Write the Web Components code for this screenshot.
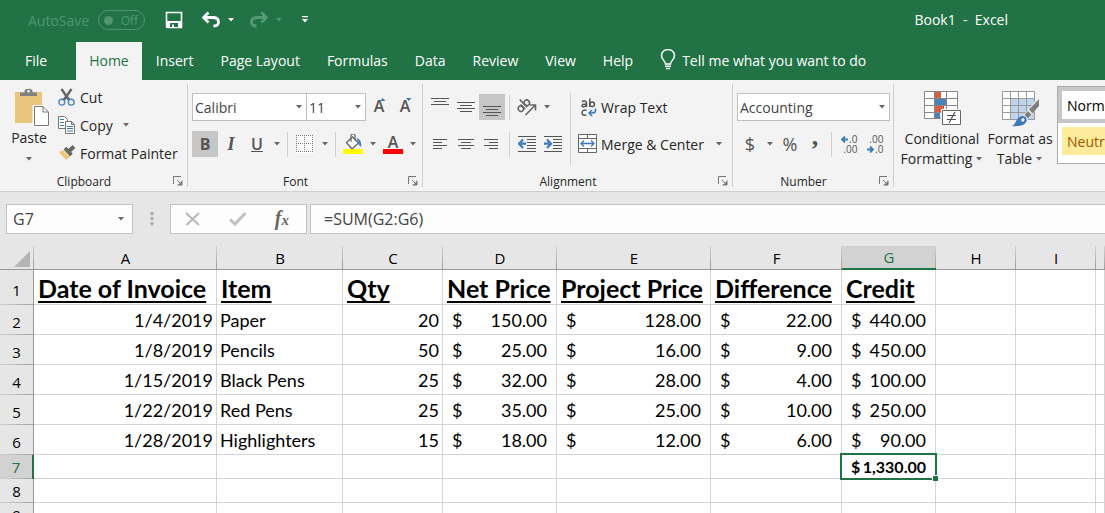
<!DOCTYPE html>
<html lang="en">
<head>
<meta charset="utf-8">
<title>Book1 - Excel</title>
<style>
body { margin: 0; font-family: "Open Sans", "Noto Sans", sans-serif; font-size: 14px; color: #262626; background: #e6e6e6; overflow: hidden; }
</style>
</head>
<body>
<excel-app></excel-app>
<script>
const RESET = `
*, *::before, *::after { box-sizing: border-box; }
button, input, select { font: inherit; color: inherit; margin: 0; padding: 0; border: 0; background: none; border-radius: 0; outline: 0; }
button { cursor: default; white-space: nowrap; }
`;
const define = (name, css, html, setup) => {
  const tpl = document.createElement('template');
  customElements.define(name, class extends HTMLElement {
    connectedCallback() {
      if (this.shadowRoot) return;
      tpl.innerHTML = `<style>${RESET}${css}</style>${html}`;
      this.attachShadow({ mode: 'open' }).append(tpl.content.cloneNode(true));
      if (setup) setup(this, this.shadowRoot);
    }
  });
};

/* Icons: [width, height, markup] */
const lines = list => list.map(([x, y, w]) => `<rect x="${x}" y="${y}" width="${w}" height="1"/>`).join('');
const ICONS = {
  save: [18, 18, `<path d="M1.500 1.500h15v15h-13.500l-1.500-1.500z" fill="none" stroke="#fff" stroke-width="1.600"/><path d="M1 10h16v7H1z" fill="#fff"/><path d="M5 12h8v4H5z" fill="#217346"/><path d="M7 13.500h2V17H7z" fill="#fff"/>`],
  undo: [20, 18, `<path d="M3 6.500h8.500c4 0 6 2 6 4.500s-2 4-5 4" fill="none" stroke="#fff" stroke-width="2.800"/><path d="M7.500 1.500L2.500 6.500l5 5" fill="none" stroke="#fff" stroke-width="2.600"/>`],
  redo: [20, 18, `<g transform="matrix(-1 0 0 1 20 0)" stroke="#549b75" fill="none"><path d="M3 6.500h8.500c4 0 6 2 6 4.500s-2 4-5 4" stroke-width="2.800"/><path d="M7.500 1.500L2.500 6.500l5 5" stroke-width="2.600"/></g>`],
  arrow: [8, 4, `<path d="M1 0h6L4 3.500z" fill="currentColor"/>`],
  qat: [6, 8, `<path d="M0 0h6v1.300H0zM0 3h6L3 6.500z" fill="#fff"/>`],
  bulb: [16, 22, `<path d="M5.500 15c0-3-4-4.500-4-8.500a6.500 6 0 0 1 13 0c0 4-4 5.500-4 8.500z" fill="none" stroke="#fff" stroke-width="1.500"/><path d="M5 17.300h6M6 19.600h4" stroke="#fff" stroke-width="1.500"/>`],
  paste: [42, 40, `<path d="M7 4h27v31H7z" fill="#ecc57d"/><path d="M12 8V4.500h4.500V3c0-3 8-3 8 0v1.500H29V8z" fill="#808080"/><circle cx="20.500" cy="3.200" r="1.300" fill="#fff"/><path d="M26 18.500h9.500l5 5V38H26z" fill="#fff" stroke="#fff" stroke-width="3"/><path d="M26.500 18.500h8.500l5.500 5.500v13.500h-14zM35 18.500V24h5.500" fill="#fff" stroke="#777"/>`],
  cut: [18, 18, `<path d="M3.500 1l7.500 11M13.500 1L6 12" stroke="#666" stroke-width="2.400"/><path d="M8.500 8l4 4M8.500 8l-4 4" stroke="#666" stroke-width="1.200"/><g fill="#f3f3f3" stroke="#4a82bb" stroke-width="1.400"><circle cx="3.800" cy="14.200" r="2.900"/><circle cx="13.200" cy="14.200" r="2.900"/></g>`],
  copy: [18, 18, `<g fill="#fff" stroke="#777"><path d="M.5.500h6l3 3v9H.5z"/><path d="M7.500 5.500h6l3 3v9h-9z"/><path d="M13.500 5.500v3h3" fill="none"/></g><path d="M2 3.500h4M2 6.500h4M2 9.500h4M9 10.500h6M9 12.500h6M9 15h6" stroke="#3c7ab8"/>`],
  painter: [18, 18, `<path d="M1 8l7-2.500 5 6L8 16z" fill="#ecc57d"/><path d="M7 4l6.500 7" stroke="#666" stroke-width="3.600"/><path d="M10.500 7.500L16 2.500" stroke="#666" stroke-width="4"/><path d="M8.500 7.500l3.500 3.500" stroke="#f3f3f3" stroke-width=".8" transform="translate(-2.300 .5)"/>`],
  launch: [10, 10, `<path d="M.5 8V.5H8M4 4l4.500 4.500M9 4.500V9H4.500" fill="none" stroke="#777"/><path d="M9 5v4H5z" fill="#777"/>`],
  grow: [16, 18, `<path d="M9 3h5.500L11.700 0z" fill="#3c7ab8"/>`],
  shrink: [16, 18, `<path d="M9 0h5.500L11.700 3z" fill="#3c7ab8"/>`],
  borders: [18, 18, `<path d="M0 0h18v18H0z" fill="#fff"/><path d="M0 .5h18M0 8.500h18M0 16.500h18M.5 0v17M8.500 0v17M16.500 0v17" stroke="#777" stroke-dasharray="1 1" fill="none"/>`],
  fill: [20, 20, `<path d="M3.500 8.500L9.500 3l6 6-6.500 6z" fill="#fff" stroke="#666" stroke-width="1.300"/><path d="M8 8V1.500c0-2 4-2 4 0v5" fill="none" stroke="#666" stroke-width="1.200"/><path d="M13.500 4c4 1 5 4 4.800 9-2-1-3-3-3.300-5z" fill="#4a82bb"/><path d="M0 15h20v5H0z" fill="#ff0"/>`],
  fontcolor: [20, 20, `<path d="M0 15h20v5H0z" fill="red"/>`],
  top: [18, 20, `<g fill="#555">${lines([[0,1,18],[3,4,12],[0,7,18]])}</g>`],
  middle: [18, 20, `<g fill="#555">${lines([[0,5,18],[3,8,12],[0,11,18],[3,14,12]])}</g>`],
  bottom: [18, 20, `<g fill="#555">${lines([[0,9,18],[3,12,12],[0,15,18],[3,18,12]])}</g>`],
  left: [18, 20, `<g fill="#555">${lines([[2,5,14],[2,8,9],[2,11,14],[2,14,9]])}</g>`],
  center: [18, 20, `<g fill="#555">${lines([[1,5,16],[4,8,10],[1,11,16],[4,14,10]])}</g>`],
  right: [18, 20, `<g fill="#555">${lines([[1,5,14],[6,8,9],[1,11,14],[6,14,9]])}</g>`],
  outdent: [18, 18, `<g fill="#555">${lines([[0,1,18],[9,4,9],[9,7,9],[9,10,9],[9,13,9],[0,16,18]])}</g><path d="M8 8.700H3M5 4.500L1 8.700l4 4.200" fill="none" stroke="#3c7ab8" stroke-width="2.200"/>`],
  indent: [18, 18, `<g fill="#555">${lines([[0,1,18],[9,4,9],[9,7,9],[9,10,9],[9,13,9],[0,16,18]])}</g><path d="M0 8.700h5M3 4.500l4 4.200-4 4.200" fill="none" stroke="#3c7ab8" stroke-width="2.200"/>`],
  orient: [20, 20, `<g fill="none" stroke="#666" stroke-width="1.600"><g transform="rotate(-45 7 9)"><ellipse cx="2.800" cy="8.700" rx="2.500" ry="2.800"/><path d="M5.700 5.500v6.500M8.500 1.500V12"/><ellipse cx="11.300" cy="8.700" rx="2.600" ry="2.800"/></g><path d="M8.500 18l9.500-9.500M13 8h5.500v5.500"/></g>`],
  wrap: [20, 20, `<g transform="translate(2)"><g fill="none" stroke="#555" stroke-width="1.500"><path d="M2 5c1-1.300 4.500-1.500 4.500 1V10M6.500 7C4 7 2 7 2 8.700s3.500 1.300 4.500-.5M9.800 1.500V10"/><ellipse cx="12.200" cy="7.300" rx="2.300" ry="2.300"/><path d="M6.500 13.500c-2-1-4.500 0-4.500 2.200s2.500 3.200 4.500 2.200"/></g><path d="M15.500 11.500v2c0 2-1 2.500-3 2.500H9.500M12 13l-3 3 3 3" fill="none" stroke="#3c7ab8" stroke-width="1.500"/></g>`],
  merge: [20, 20, `<path d="M.5.500h18v18H.5z" fill="#fff" stroke="#666"/><path d="M.5 4.500h18M.5 14.500h18M9.500.5v4M9.500 14.500v4" stroke="#666"/><path d="M3 9.500h13M6 6.500l-3 3 3 3M13 6.500l3 3-3 3" fill="none" stroke="#3c7ab8" stroke-width="1.400"/>`],
  leftArrow: [7, 7, `<path d="M7 3.500H1.500M4 .5l-3 3 3 3" fill="none" stroke="#3c7ab8" stroke-width="1.800"/>`],
  rightArrow: [7, 7, `<path d="M0 3.500h5.500M3 .5l3 3-3 3" fill="none" stroke="#3c7ab8" stroke-width="1.800"/>`],
  conditional: [38, 36, `<path d="M1.500.5h33v27h-33z" fill="#fff"/><path d="M12 1h6v6h-6zM12 15h9v6h-9z" fill="#d65f41"/><path d="M12 8h11v6H12zM12 22h5v6h-5z" fill="#4a82bb"/><path d="M1.500.5h33v27h-33zM1.500 7.500h33M1.500 14.500h33M1.500 21.500h33M11.500.5v27M23.500.5v27" fill="none" stroke="#888"/><path d="M18 18h20v16H18z" fill="#f3f3f3"/><path d="M19.500 19.500h18v14h-18z" fill="#fff" stroke="#666"/><path d="M24 24.500h9M24 28.500h9M32 21l-6 11" stroke="#555" stroke-width="1.200" fill="none"/>`],
  format: [38, 36, `<path d="M1.500.5h32v28h-32z" fill="#fff"/><path d="M9 8h25v21H9z" fill="#bfd3ea"/><path d="M1.500.5h32v28h-32zM1.500 7.500h32M1.500 14.500h32M1.500 21.500h32M9.500.5v28M17.500.5v28M25.500.5v28" fill="none" stroke="#999"/><path d="M38 6L20 27l4 5 14-17z" fill="#f3f3f3"/><path d="M38 8L28 18.500l3.500 4L38 15z" fill="#7f7f7f"/><path d="M27 20l-3.500 4 3.500 3.500 3.500-4z" fill="#7f7f7f"/><path d="M11 35c4-1 4-9 10-10 5-.5 6 5 3 7.500-3 2.500-8 3-13 2.500z" fill="#3c7ab8"/><path d="M20 29c1-2 3-2 3.500-1 .3 1.500-1 2.500-2 3z" fill="#fff"/>`],
  dots: [4, 14, `<path d="M.5 0h3v3h-3zM.5 5h3v3h-3zM.5 10h3v3h-3z" fill="#aaa"/>`],
  cancel: [16, 14, `<path d="M1 1l13 12M14 1L1.500 13" stroke="#b8b8b8" stroke-width="2" fill="none"/>`],
  enter: [18, 14, `<path d="M1 7.500l5 4.500L16.500 1" stroke="#c0c0c0" stroke-width="3" fill="none"/>`],
  corner: [16, 16, `<path d="M16 0v16H0z" fill="#b4b4b4"/>`]
};
define('ui-icon', `:host { display: block; flex: none; line-height: 0; } svg { display: block; }`, '', (el, root) => {
  const [w, h, body] = ICONS[el.getAttribute('name')];
  root.innerHTML += `<svg width="${w}" height="${h}" viewBox="0 0 ${w} ${h}" aria-hidden="true">${body}</svg>`;
});
define('drop-arrow', `:host { display: block; flex: none; color: #666; } button { display: flex; align-items: center; justify-content: center; width: 14px; height: 26px; }`,
  `<button aria-label="More options"><ui-icon name="arrow"></ui-icon></button>`);
define('v-rule', `:host { display: block; flex: none; width: 1px; background: #d0d0d0; }`, '');

define('combo-box', `
:host { display: grid; grid-template: 28px / minmax(0, 1fr); align-items: center; }
select { grid-area: 1 / 1; width: 100%; height: 28px; padding: 0 2px; border: 1px solid #c0c0c0; background: #fff; appearance: none; color: #444; }
ui-icon { grid-area: 1 / 1; justify-self: end; margin-right: 4px; color: #666; pointer-events: none; }`,
`<select><option></option></select><ui-icon name="arrow"></ui-icon>`, (el, root) => {
  root.querySelector('select').setAttribute('aria-label', el.getAttribute('label'));
  root.querySelector('option').textContent = el.getAttribute('value');
});

define('title-bar', `
:host { display: flex; align-items: center; height: 40px; padding: 0 97px 0 28px; background: #217346; color: #fff; }
label { display: flex; align-items: center; gap: 9px; color: #4f9670; }
.pill { display: flex; align-items: center; justify-content: space-between; width: 47px; height: 20px; padding: 0 6px 0 5px; border: 1px solid #4f9670; border-radius: 10px; font-size: 12px; }
input { appearance: none; width: 9px; height: 9px; border-radius: 5px; background: #4f9670; }
nav { display: flex; align-items: center; margin-left: 20px; }
.undo { margin-left: 18px; } .redo { margin-left: 8px; } .drop { padding: 6px; }
.dim { color: #4f9670; }
.qat { margin-left: 13px; }
h1 { margin: 0 0 2px auto; font-size: 14px; font-weight: 400; white-space: pre; }`,
`<label><span>AutoSave</span><span class="pill"><input type="checkbox" aria-label="AutoSave"><span>Off</span></span></label>
<nav><button aria-label="Save"><ui-icon name="save"></ui-icon></button>
<button class="undo" aria-label="Undo"><ui-icon name="undo"></ui-icon></button><button class="drop" aria-label="Undo list"><ui-icon name="arrow"></ui-icon></button>
<button class="redo" aria-label="Redo"><ui-icon name="redo"></ui-icon></button><button class="drop dim" aria-label="Redo list"><ui-icon name="arrow"></ui-icon></button>
<button class="qat" aria-label="Customize toolbar"><ui-icon name="qat"></ui-icon></button></nav>
<h1>Book1  -  Excel</h1>`);

define('ribbon-tabs', `
:host { display: flex; gap: 1px; padding: 2px 0 0 12px; height: 40px; background: #217346; color: #fff; }
button { padding: 0 13px 2px; height: 38px; }
.file { margin-right: 15px; }
.on { background: #f3f3f3; color: #217346; }
label { display: flex; align-items: center; gap: 6px; margin-left: 13px; padding-bottom: 2px; }
input { width: 240px; height: 28px; } input::placeholder { color: #fff; opacity: 1; }`,
`<button class="file">File</button><button class="on">Home</button><button>Insert</button><button>Page Layout</button><button>Formulas</button><button>Data</button><button>Review</button><button>View</button><button>Help</button>
<label><ui-icon name="bulb"></ui-icon><input type="text" aria-label="Tell me what you want to do" placeholder="Tell me what you want to do"></label>`);

define('ribbon-group', `
:host { display: grid; flex: none; grid-template: 87px 20px / minmax(0, 1fr); padding-top: 4px; background: linear-gradient(#d0d0d0, #d0d0d0) right 4px / 1px 103px no-repeat; }
footer { display: grid; grid-template-columns: 1fr 20px; align-items: center; font-size: 12px; text-align: center; }
footer button { display: flex; justify-content: center; }`,
`<slot></slot><footer><span class="name"></span><button><ui-icon name="launch"></ui-icon></button></footer>`, (el, root) => {
  const name = el.getAttribute('label');
  root.querySelector('.name').textContent = name;
  root.querySelector('button').setAttribute('aria-label', name + ' settings');
});

define('clipboard-tools', `
:host { display: flex; gap: 8px; padding-left: 8px; }
.paste { display: flex; flex-direction: column; align-items: center; width: 42px; height: 84px; padding-top: 4px; line-height: 20px; }
.paste ui-icon[name=arrow] { margin-top: 9px; color: #666; }
.list { display: flex; flex-direction: column; }
.row { display: flex; align-items: center; gap: 6px; height: 28px; padding-bottom: 2px; }
.row button { display: flex; align-items: center; gap: 4px; }`,
`<button class="paste"><ui-icon name="paste"></ui-icon><span>Paste</span><ui-icon name="arrow"></ui-icon></button>
<div class="list"><div class="row"><button><ui-icon name="cut"></ui-icon>Cut</button></div>
<div class="row"><button><ui-icon name="copy"></ui-icon>Copy</button><drop-arrow></drop-arrow></div>
<div class="row"><button><ui-icon name="painter"></ui-icon>Format Painter</button></div></div>`);

const TOOLROW = `
.row { display: flex; align-items: center; height: 28px; }
.row > button { display: flex; flex: none; align-items: center; justify-content: center; width: 26px; height: 26px; color: #555; }
.row > button.on { background: #c6c6c6; }
.row > v-rule { height: 25px; }
`;
define('font-tools', TOOLROW + `
:host { display: flex; flex-direction: column; gap: 9px; padding: 9px 0 0 4px; }
.face { width: 115px; } .size { width: 60px; margin-left: -1px; }
.letter { display: grid; justify-items: center; font-weight: 600; font-size: 16px; line-height: 20px; }
.letter > * { grid-area: 1 / 1; } .letter span { line-height: 16px; }
.b { font-weight: 700; font-size: 16px; } .i { font: italic 700 18px "Liberation Serif", serif; } .u { font-weight: 600; font-size: 16px; text-decoration: underline; }
.gap { margin: 0 4px 0 3px; } `,
`<div class="row"><combo-box class="face" label="Font" value="Calibri"></combo-box><combo-box class="size" label="Font size" value="11"></combo-box>
<button aria-label="Increase font size"><span class="letter"><ui-icon name="grow"></ui-icon><span>A</span></span></button><button aria-label="Decrease font size"><span class="letter"><ui-icon name="shrink"></ui-icon><span>A</span></span></button></div>
<div class="row"><button class="on b">B</button><button class="i">I</button><button class="u">U</button><drop-arrow></drop-arrow><v-rule class="gap"></v-rule>
<button aria-label="Borders"><ui-icon name="borders"></ui-icon></button><drop-arrow></drop-arrow><v-rule class="gap"></v-rule><button aria-label="Fill color"><ui-icon name="fill"></ui-icon></button><drop-arrow></drop-arrow>
<button aria-label="Font color"><span class="letter"><ui-icon name="fontcolor"></ui-icon><span>A</span></span></button><drop-arrow></drop-arrow></div>`);

define('alignment-tools', TOOLROW + `
:host { display: flex; padding: 9px 4px 0; }
.col { display: flex; flex: none; flex-direction: column; gap: 9px; }
.rule { margin: 0 4px; }
.tall { height: 72px; margin: 0 7px 0 4px; }
.row > button.text { width: auto; gap: 3px; color: inherit; }
.merge { gap: 8px; }`,
`<div class="col"><div class="row"><button aria-label="Top align"><ui-icon name="top"></ui-icon></button><button aria-label="Middle align"><ui-icon name="middle"></ui-icon></button><button class="on" aria-label="Bottom align"><ui-icon name="bottom"></ui-icon></button><v-rule class="rule"></v-rule><button aria-label="Orientation"><ui-icon name="orient"></ui-icon></button><drop-arrow></drop-arrow></div>
<div class="row"><button aria-label="Align left"><ui-icon name="left"></ui-icon></button><button aria-label="Center"><ui-icon name="center"></ui-icon></button><button aria-label="Align right"><ui-icon name="right"></ui-icon></button><v-rule class="rule"></v-rule><button aria-label="Decrease indent"><ui-icon name="outdent"></ui-icon></button><button aria-label="Increase indent"><ui-icon name="indent"></ui-icon></button></div></div>
<v-rule class="tall"></v-rule>
<div class="col"><div class="row"><button class="text"><ui-icon name="wrap"></ui-icon>Wrap Text</button></div><div class="row merge"><button class="text"><ui-icon name="merge"></ui-icon>Merge &amp; Center</button><drop-arrow></drop-arrow></div></div>`);

define('number-tools', TOOLROW + `
:host { display: flex; flex-direction: column; gap: 9px; padding: 9px 4px 0; }
.row > button { font-size: 18px; } .row > button.comma { width: 24px; font: 700 26px/12px "Liberation Serif", serif; align-items: start; }
.rule { margin: 0 4px; }
.row > button.dec { display: grid; font-size: 10px; line-height: 10px; align-content: center; justify-content: stretch; padding: 0 5px; }
.dec span { display: flex; align-items: center; justify-content: flex-end; gap: 1px; }`,
`<combo-box label="Number format" value="Accounting"></combo-box>
<div class="row"><button>$</button><drop-arrow></drop-arrow><button>%</button><button class="comma">,</button><v-rule class="rule"></v-rule>
<button class="dec"><span><ui-icon name="leftArrow"></ui-icon>.0</span><span>.00</span></button><button class="dec"><span>.00</span><span><ui-icon name="rightArrow"></ui-icon>.0</span></button></div>`);

define('style-tools', `
:host { display: flex; flex: 1; min-width: 0; padding: 6px 0 0 4px; overflow: hidden; }
.big { display: flex; flex: none; flex-direction: column; align-items: center; height: 84px; padding-top: 5px; line-height: 20px; width: 88px; }
.big.fmt { width: 68px; margin-right: 3px; }
.big ui-icon { margin-bottom: 2px; }
.big span { display: flex; align-items: center; gap: 3px; } .big span ui-icon { margin: 0; color: #666; }
.gallery { display: flex; flex: 1 0 150px; flex-direction: column; gap: 4px; height: 78px; border: 1px solid #ababab; background: #fff; }
.gallery button { text-align: left; height: 28px; margin-left: 4px; padding-left: 5px; }
.gallery .normal { height: 36px; margin: 0; border: 4px solid #c6c6c6; color: #000; }
.gallery .neutral { background: #ffeb9c; color: #9c5700; }`,
`<button class="big"><ui-icon name="conditional"></ui-icon><span>Conditional</span><span>Formatting<ui-icon name="arrow"></ui-icon></span></button>
<button class="big fmt"><ui-icon name="format"></ui-icon><span>Format as</span><span>Table<ui-icon name="arrow"></ui-icon></span></button>
<div class="gallery"><button class="normal">Normal</button><button class="neutral">Neutral</button></div>`);

define('excel-ribbon', `
:host { display: flex; height: 112px; background: #f3f3f3; border-bottom: 1px solid #cfcfcf; overflow: hidden; }
.clip { width: 188px; } .font { width: 235px; } .align { width: 310px; } .num { width: 161px; }`,
`<ribbon-group class="clip" label="Clipboard"><clipboard-tools></clipboard-tools></ribbon-group>
<ribbon-group class="font" label="Font"><font-tools></font-tools></ribbon-group>
<ribbon-group class="align" label="Alignment"><alignment-tools></alignment-tools></ribbon-group>
<ribbon-group class="num" label="Number"><number-tools></number-tools></ribbon-group>
<style-tools></style-tools>`);

define('formula-bar', `
:host { display: flex; align-items: center; height: 54px; padding-left: 6px; color: #444; font-size: 16px; }
.box { display: flex; align-items: center; height: 30px; border: 1px solid #c3c3c3; background: #fdfdfd; }
.name { width: 127px; padding: 0 4px 0 6px; } .name input { flex: 1; min-width: 0; }
.dots { margin: 0 16px 0 17px; }
.tools { width: 137px; margin-right: 3px; padding-right: 3px; justify-content: space-around; }
.fx { font: italic 700 20px/20px "Liberation Serif", serif; color: #666; } .fx small { font-size: 15px; }
.formula { flex: 1; border-right: 0; padding-left: 13px; } .formula input { flex: 1; }`,
`<div class="box name"><input type="text" aria-label="Name box" value="G7"><drop-arrow></drop-arrow></div><ui-icon class="dots" name="dots"></ui-icon>
<div class="box tools"><button aria-label="Cancel"><ui-icon name="cancel"></ui-icon></button><button aria-label="Enter"><ui-icon name="enter"></ui-icon></button><button class="fx">f<small>x</small></button></div>
<div class="box formula"><input type="text" aria-label="Formula" value="=SUM(G2:G6)"></div>`);

const HEAD = ['Date of Invoice', 'Item', 'Qty', 'Net Price', 'Project Price', 'Difference', 'Credit'];
const DATA = [
  ['1/4/2019', 'Paper', '20', '150.00', '128.00', '22.00', '440.00'],
  ['1/8/2019', 'Pencils', '50', '25.00', '16.00', '9.00', '450.00'],
  ['1/15/2019', 'Black Pens', '25', '32.00', '28.00', '4.00', '100.00'],
  ['1/22/2019', 'Red Pens', '25', '35.00', '25.00', '10.00', '250.00'],
  ['1/28/2019', 'Highlighters', '15', '18.00', '12.00', '6.00', '90.00']
];
const blanks = n => '<td></td>'.repeat(n);
const money = v => `<td><div class="money"><span>$</span><span>${v}</span></div></td>`;
define('sheet-grid', `
:host { display: block; overflow: hidden; }
table { width: 100%; table-layout: fixed; border-collapse: separate; border-spacing: 0; background: #fff; font: 18px/22px Lato, sans-serif; color: #000; }
td, th { padding: 0; font-weight: 400; white-space: nowrap; }
td { height: 30px; padding: 1px 3px 0; border-right: 1px solid #d4d4d4; border-bottom: 1px solid #d4d4d4; vertical-align: middle; }
th { font: 15px/20px "Open Sans", sans-serif; }
thead th { height: 24px; border-bottom: 1px solid #999; background: linear-gradient(#d0d0d0, #a0a0a0) right / 1px 100% no-repeat #e6e6e6; }
tbody th { padding-top: 4px; border-right: 1px solid #999; background: linear-gradient(90deg, #d0d0d0, #a0a0a0) bottom / 100% 1px no-repeat #e6e6e6; }
thead th.on { border-bottom: 2px solid #217346; background-color: #d2d2d2; color: #217346; }
tbody th.on { border-right: 2px solid #217346; background-color: #d2d2d2; color: #217346; }
.corner ui-icon { margin: 2px 4px 0 14px; }
.titles td { height: 35px; padding: 1px 4px 0; font-size: 25px; line-height: 30px; font-weight: 700; text-decoration: underline 2px; text-underline-offset: 3px; text-decoration-skip-ink: none; }
.num { text-align: right; }
.money { display: flex; justify-content: space-between; padding: 0 6px; }
.short td { height: 24px; padding-top: 0; } .short th { padding-top: 0; height: 24px; }
.short .active { position: relative; font-size: 16px; font-weight: 700; }
.active::before { content: ""; position: absolute; inset: -2px; border: 2px solid #217346; }
.active::after { content: ""; position: absolute; right: -3px; bottom: -3px; width: 6px; height: 6px; border: solid #fff; border-width: 1px 0 0 1px; background: #217346; }`,
`<table><colgroup>${[34, 183, 126, 100, 114, 154, 131, 94, 80, 80].map(w => `<col style="width:${w}px">`).join('')}<col></colgroup>
<thead><tr><th class="corner"><ui-icon name="corner"></ui-icon></th>${[...'ABCDEFGHI'].map(c => `<th${c === 'G' ? ' class="on"' : ''}>${c}</th>`).join('')}<th></th></tr></thead>
<tbody><tr class="titles"><th>1</th>${HEAD.map(h => `<td>${h}</td>`).join('')}${blanks(3)}</tr>
${DATA.map((r, i) => `<tr><th>${i + 2}</th><td class="num">${r[0]}</td><td>${r[1]}</td><td class="num">${r[2]}</td>${r.slice(3).map(money).join('')}${blanks(3)}</tr>`).join('')}
<tr class="short"><th class="on">7</th>${blanks(6)}<td class="active"><div class="money"><span>$</span><span>1,330.00</span></div></td>${blanks(3)}</tr>
<tr class="short"><th>8</th>${blanks(10)}</tr><tr class="short"><th>9</th>${blanks(10)}</tr></tbody></table>`);

define('excel-app', `:host { display: flex; flex-direction: column; height: 100vh; overflow: hidden; } title-bar, ribbon-tabs, excel-ribbon, formula-bar { flex: none; } sheet-grid { flex: 1; min-height: 0; }`,
`<title-bar></title-bar><ribbon-tabs></ribbon-tabs><excel-ribbon></excel-ribbon><formula-bar></formula-bar><sheet-grid></sheet-grid>`);
</script>
</body>
</html>
